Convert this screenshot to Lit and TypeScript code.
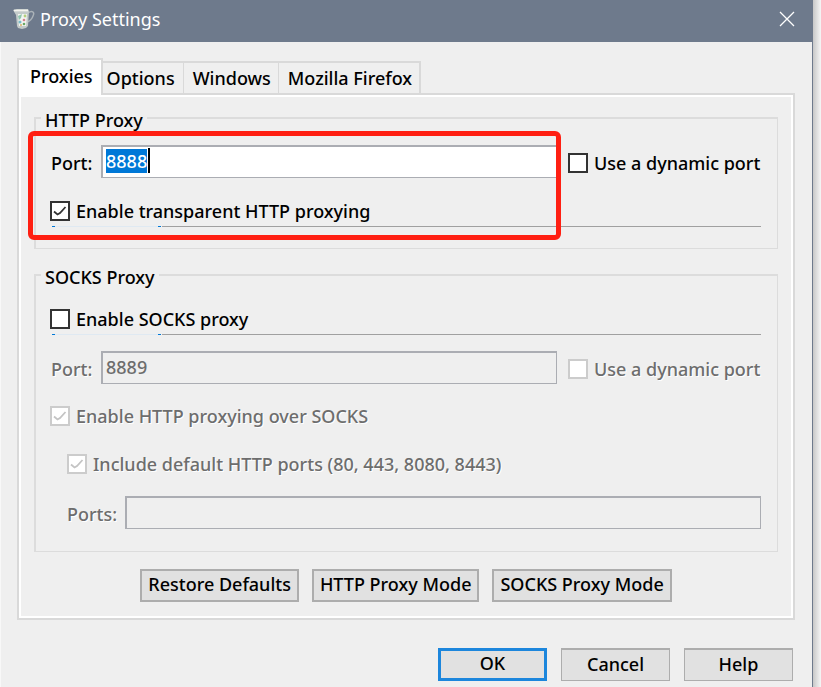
import { LitElement, html, css } from "lit";
import { customElement, state, query } from "lit/decorators.js";
import { classMap } from "lit/directives/class-map.js";

const TABS = ["Proxies", "Options", "Windows", "Mozilla Firefox"];

@customElement("app-root")
export class AppRoot extends LitElement {
  @state() private activeTab = 0;
  @query("#http-port") private httpPort!: HTMLInputElement;

  static styles = css`
    :host {
      display: block;
      box-sizing: border-box;
      min-height: 100vh;
      padding-right: 8px;
      background: linear-gradient(to left, #f6f6f6, #c8c8c8 8px);
      color: #000;
      font: 500 18px/24px "Noto Sans", "Open Sans", sans-serif;
    }
    * {
      box-sizing: border-box;
    }
    .window {
      min-height: 100vh;
      background: #efefef;
      border-right: 1px solid #6e7a8c;
      border-left: 1px solid #f8f8f8;
    }
    .titlebar {
      display: flex;
      align-items: center;
      gap: 5px;
      height: 42px;
      margin: 0 -1px;
      padding: 0 18px 4px 12px;
      background: #6e7a8c;
      color: #fff;
    }
    .title {
      flex: 1;
      margin: 0;
      font: inherit;
      font-weight: 400;
    }
    .close {
      display: flex;
      padding: 0;
      border: 0;
      background: none;
    }
    .body {
      padding: 16px 17px 6px 16px;
    }
    .tabs {
      display: flex;
      align-items: flex-end;
    }
    .tab {
      height: 32px;
      padding: 0 8px 0 4px;
      border: 0 solid #d9d9d9;
      border-width: 2px 1px 0 0;
      background: #efefef;
      color: inherit;
      font: inherit;
      white-space: nowrap;
    }
    .tab:nth-child(n + 3) {
      padding: 0 7px 0 9px;
    }
    .tab:last-child {
      border-right-width: 2px;
    }
    .tab.active {
      position: relative;
      height: 37px;
      margin-bottom: -2px;
      padding: 0 8px 3px 11px;
      border-width: 2px 2px 0;
      background: #fff;
    }
    .panel {
      padding: 9px 15px 16px;
      border: 2px solid #d9d9d9;
      box-shadow: inset 0 0 0 2px #fff;
    }
    .group {
      position: relative;
      min-width: 0;
      margin: 0 0 12px;
      padding: 13px 16px 21px 14px;
      border: 2px solid #dcdcdc;
      border-width: 2px 1px 1px 2px;
    }
    .group.socks {
      margin-bottom: 17px;
      padding-top: 18px;
      padding-bottom: 22px;
    }
    legend {
      margin-left: -9px;
      padding: 4px 4px 0;
    }
    .row {
      display: flex;
      align-items: center;
    }
    .field-label {
      width: 51px;
      padding: 2px 0 0 1px;
    }
    .field {
      position: relative;
      flex: 1;
      display: flex;
      margin-right: 11px;
    }
    .field.last {
      margin-right: 0;
    }
    .text {
      width: 100%;
      height: 33px;
      padding: 0 3px 2px;
      border: 2px solid #abadb3;
      border-width: 2px 1px 1px 2px;
      border-radius: 0;
      outline: 0;
      background: #fff;
      color: inherit;
      font: inherit;
    }
    .text::selection {
      background: #0078d7;
      color: #fff;
    }
    .text:disabled {
      background: #efefef;
      color: #6d6d6d;
    }
    .caret {
      position: absolute;
      top: 3px;
      left: 47px;
      width: 2px;
      height: 25px;
      background: #000;
    }
    .check {
      display: flex;
      align-items: center;
      gap: 6px;
      white-space: nowrap;
    }
    .check.dynamic {
      min-width: 193px;
      padding-top: 2px;
    }
    .check input {
      appearance: none;
      flex: none;
      width: 20px;
      height: 20px;
      margin: 0;
      border: 2px solid #333;
      background: #fff;
    }
    .check input:disabled {
      border-color: #ccc;
    }
    .box {
      position: relative;
      display: flex;
    }
    .tick {
      position: absolute;
      inset: 2px;
      color: #333;
      pointer-events: none;
    }
    .off {
      color: #6d6d6d;
      text-shadow: 1px 1px #fff;
    }
    .off .tick {
      color: #c4c4c4;
    }
    .rule {
      height: 1px;
      margin: 3px 0 0 2px;
      border: 0;
      background: linear-gradient(
        to right,
        #0078d7 3px,
        #dfe9f2 3px 106px,
        #0078d7 106px 109px,
        #efefef 109px 110px,
        #a0a0a0 110px
      );
    }
    .transparent {
      margin-top: 21px;
    }
    .port.socks-port {
      margin-top: 16px;
    }
    .over {
      margin-top: 20px;
    }
    .include {
      margin: 24px 0 0 17px;
    }
    .ports {
      margin: 20px 0 0 16px;
    }
    .ports .field-label {
      width: 59px;
    }
    .highlight {
      position: absolute;
      top: -1px;
      right: 216px;
      bottom: 8px;
      left: -8px;
      border: 5px solid #ff1f12;
      border-radius: 6px;
      pointer-events: none;
    }
    .modes {
      display: flex;
      justify-content: center;
      gap: 13px;
    }
    .btn {
      height: 33px;
      padding: 0 6px 3px;
      border: 2px solid #adadad;
      border-radius: 0;
      background: #e1e1e1;
      color: inherit;
      font: inherit;
      white-space: nowrap;
    }
    .actions {
      display: flex;
      justify-content: flex-end;
      gap: 14px;
      margin: 28px 2px 0 0;
    }
    .actions .btn {
      width: 109px;
      border-width: 2px 1px 1px;
    }
    .actions .btn.primary {
      border: 3px solid #1c86dc;
    }
  `;

  firstUpdated() {
    this.httpPort.focus();
    this.httpPort.select();
  }

  private check(id: string, text: string, opts: { on?: boolean; off?: boolean; cls?: string } = {}) {
    return html`<label class="check ${opts.cls ?? ""} ${opts.off ? "off" : ""}" for=${id}>
      <span class="box">
        <input type="checkbox" id=${id} ?checked=${opts.on} ?disabled=${opts.off} />
        ${opts.on
          ? html`<svg class="tick" width="16" height="16" viewBox="0 0 16 16">
              <path d="M2 8.5 5.5 11.5 8 10 13.5 4" fill="none" stroke="currentColor" stroke-width="1.8" />
            </svg>`
          : ""}
      </span>
      ${text}
    </label>`;
  }

  private jug() {
    return html`<svg width="23" height="22" viewBox="0 0 23 22" aria-hidden="true">
      <path d="M16 5C20 2 23 4 21 8 20 11 18 13 15 14" fill="none" stroke="#aab2b8" stroke-width="1.5" />
      <path d="M1 2 5 1H16L17 3 16 18 14 20 10 21 6 20 5 18 4 7Z" fill="#c3cac9" />
      <path d="M2 2.5H16" stroke="#f4f3ee" stroke-width="1.6" />
      <path d="M6 6H15L14 18H7Z" fill="#f2f4f0" />
      <path d="M6 8 10 6 9 10 7 12Z" fill="#8fc4ad" />
      <circle cx="13" cy="8" r="1.4" fill="#b4cf7c" />
      <circle cx="8" cy="14" r="1.5" fill="#78bcc9" />
      <circle cx="12" cy="12" r="1.3" fill="#d5808c" />
      <circle cx="12" cy="16" r="1.3" fill="#69a765" />
      <circle cx="9" cy="17" r="1" fill="#d9b06a" />
    </svg>`;
  }

  render() {
    return html`<main class="window">
      <header class="titlebar">
        ${this.jug()}
        <h1 class="title">Proxy Settings</h1>
        <button class="close" aria-label="Close">
          <svg width="16" height="16" viewBox="0 0 16 16">
            <path d="M1 1 15 15M15 1 1 15" stroke="#fff" stroke-width="1.3" />
          </svg>
        </button>
      </header>
      <div class="body">
        <div class="tabs" role="tablist">
          ${TABS.map(
            (name, i) => html`<button
              role="tab"
              aria-selected=${i === this.activeTab}
              class=${classMap({ tab: true, active: i === this.activeTab })}
              @click=${() => (this.activeTab = i)}
            >${name}</button>`
          )}
        </div>
        <section class="panel" role="tabpanel">
          <fieldset class="group">
            <legend>HTTP Proxy</legend>
            <div class="row port">
              <label class="field-label" for="http-port">Port:</label>
              <span class="field">
                <input class="text" id="http-port" value="8888" />
                <span class="caret"></span>
              </span>
              ${this.check("http-dynamic", "Use a dynamic port", { cls: "dynamic" })}
            </div>
            ${this.check("transparent", "Enable transparent HTTP proxying", { on: true, cls: "transparent" })}
            <hr class="rule" />
            <div class="highlight"></div>
          </fieldset>
          <fieldset class="group socks">
            <legend>SOCKS Proxy</legend>
            ${this.check("socks", "Enable SOCKS proxy")}
            <hr class="rule" />
            <div class="row port socks-port">
              <label class="field-label off" for="socks-port">Port:</label>
              <span class="field">
                <input class="text" id="socks-port" value="8889" disabled />
              </span>
              ${this.check("socks-dynamic", "Use a dynamic port", { off: true, cls: "dynamic" })}
            </div>
            ${this.check("over", "Enable HTTP proxying over SOCKS", { on: true, off: true, cls: "over" })}
            ${this.check("include", "Include default HTTP ports (80, 443, 8080, 8443)", {
              on: true,
              off: true,
              cls: "include",
            })}
            <div class="row ports">
              <label class="field-label off" for="ports">Ports:</label>
              <span class="field last"><input class="text" id="ports" disabled /></span>
            </div>
          </fieldset>
          <div class="modes">
            <button class="btn">Restore Defaults</button>
            <button class="btn">HTTP Proxy Mode</button>
            <button class="btn">SOCKS Proxy Mode</button>
          </div>
        </section>
        <footer class="actions">
          <button class="btn primary">OK</button>
          <button class="btn">Cancel</button>
          <button class="btn">Help</button>
        </footer>
      </div>
    </main>`;
  }
}
